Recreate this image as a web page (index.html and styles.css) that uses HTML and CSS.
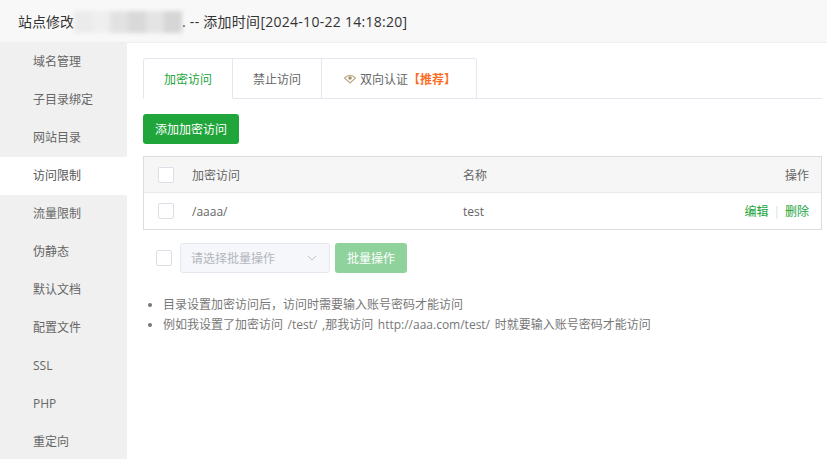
FILE: index.html
```html
<!DOCTYPE html>
<html lang="zh-CN">
<head>
    <meta charset="UTF-8">
    <meta name="viewport" content="width=device-width, initial-scale=1.0">
    <title>站点修改</title>
    <link rel="stylesheet" href="styles.css">
</head>
<body>
    <div class="title-bar">
        <span>站点修改</span><span class="blur-name"><i></i><i></i><i></i><i></i><i></i><i></i></span><span class="title-time">. -- 添加时间[2024-10-22 14:18:20]</span>
    </div>

    <div class="site-layout">
        <ul class="side-menu">
            <li>域名管理</li>
            <li>子目录绑定</li>
            <li>网站目录</li>
            <li class="active">访问限制</li>
            <li>流量限制</li>
            <li>伪静态</li>
            <li>默认文档</li>
            <li>配置文件</li>
            <li>SSL</li>
            <li>PHP</li>
            <li>重定向</li>
        </ul>

        <div class="content">
            <div class="tabs">
                <div class="tab active">加密访问</div>
                <div class="tab">禁止访问</div>
                <div class="tab tab-wide">
                    <svg class="eye-icon" width="12" height="10" viewBox="0 0 12 10">
                        <path d="M0.5 4 Q6 -1.5 11.5 4 L6 9 Z" fill="none" stroke="#b9a67f" stroke-width="1.1"/>
                        <circle cx="6" cy="4" r="1.8" fill="#a8926a"/>
                    </svg>
                    <span>双向认证</span><span class="tab-tip">【推荐】</span>
                </div>
            </div>

            <button class="btn btn-add">添加加密访问</button>

            <div class="table-box">
                <div class="table-row table-head">
                    <div class="cell-check"><span class="checkbox"></span></div>
                    <div class="cell-path">加密访问</div>
                    <div class="cell-name">名称</div>
                    <div class="cell-ops">操作</div>
                </div>
                <div class="table-row">
                    <div class="cell-check"><span class="checkbox"></span></div>
                    <div class="cell-path">/aaaa/</div>
                    <div class="cell-name">test</div>
                    <div class="cell-ops"><a class="op-link">编辑</a><span class="op-sep">|</span><a class="op-link">删除</a></div>
                </div>
            </div>

            <div class="batch-bar">
                <span class="checkbox"></span>
                <div class="batch-select">
                    <span>请选择批量操作</span>
                    <svg width="10" height="6" viewBox="0 0 10 6"><path d="M1 1 L5 5 L9 1" fill="none" stroke="#c0c4cc" stroke-width="1"/></svg>
                </div>
                <button class="btn btn-batch">批量操作</button>
            </div>

            <ul class="help-list">
                <li>目录设置加密访问后，访问时需要输入账号密码才能访问</li>
                <li>例如我设置了加密访问 /test/ ,那我访问 http://aaa.com/test/ 时就要输入账号密码才能访问</li>
            </ul>
        </div>
    </div>
</body>
</html>
```

FILE: styles.css
```css
* {
    box-sizing: border-box;
}

html, body {
    height: 100%;
}

body {
    margin: 0;
    overflow: hidden;
    background-color: #fff;
    color: #666;
    font-family: "Open Sans", "Noto Sans CJK SC", sans-serif;
    font-size: 12px;
}

.title-bar {
    display: flex;
    align-items: center;
    height: 43px;
    padding-left: 18px;
    background-color: #f8f8f8;
    border-bottom: 1px solid #eee;
    color: #333;
    font-size: 14px;
}

.title-time {
    letter-spacing: 0.27px;
}

.blur-name {
    display: flex;
    width: 108px;
    height: 22px;
    margin-top: 1px;
    filter: blur(2px);
}

.blur-name i {
    flex: 1;
    background-color: #ebebeb;
}

.blur-name i:nth-child(2) { background-color: #efefef; }
.blur-name i:nth-child(3) { background-color: #e2e2e2; }
.blur-name i:nth-child(4) { background-color: #d9d9d9; }
.blur-name i:nth-child(5) { background-color: #e4e4e4; }
.blur-name i:nth-child(6) { background-color: #d6d6d6; }

.site-layout {
    display: flex;
    height: 416px;
}

.side-menu {
    width: 127px;
    margin: 0;
    padding: 0;
    list-style: none;
    background-color: #f0f0f0;
    flex-shrink: 0;
}

.side-menu li {
    height: 38px;
    padding-left: 33px;
    line-height: 37px;
    color: #666;
}

.side-menu li.active {
    background-color: #fff;
    color: #555;
}

.content {
    flex: 1;
    padding: 15px 5px 0 16px;
}

.tabs {
    display: flex;
    height: 41px;
    border-bottom: 1px solid #e6e6ee;
}

.tab {
    display: flex;
    align-items: center;
    justify-content: center;
    width: 89px;
    height: 41px;
    padding-top: 1px;
    border: 1px solid #e6e6ee;
    border-left: none;
    background-color: #fff;
    color: #666;
}

.tab:first-child {
    width: 90px;
    border-left: 1px solid #e6e6ee;
    border-radius: 3px 0 0 0;
}

.tab:last-child {
    border-radius: 0 3px 0 0;
}

.tab.active {
    border-bottom-color: #fff;
    color: #20a53a;
}

.tab-wide {
    width: 155px;
    padding-left: 2px;
}

.eye-icon {
    margin-right: 4px;
}

.tab-tip {
    color: #fc6d26;
    font-weight: bold;
}

.btn {
    display: block;
    padding: 0;
    border: none;
    border-radius: 3px;
    color: #fff;
    font-family: inherit;
    font-size: 12px;
}

.btn-add {
    width: 96px;
    height: 30px;
    margin-top: 15px;
    background-color: #20a53a;
}

.table-box {
    margin-top: 12px;
    border: 1px solid #ddd;
}

.table-row {
    display: flex;
    align-items: center;
    height: 36px;
    color: #666;
}

.table-head {
    background-color: #f6f6f6;
    border-bottom: 1px solid #e9e9ef;
}

.cell-check {
    width: 48px;
    padding-left: 14px;
    display: flex;
}

.cell-path {
    width: 271px;
}

.cell-name {
    flex: 1;
}

.cell-ops {
    padding-right: 12px;
    text-align: right;
}

.checkbox {
    display: block;
    width: 16px;
    height: 16px;
    border: 1px solid #dcdfe6;
    border-radius: 2px;
    background-color: #fff;
}

.op-link {
    color: #20a53a;
}

.op-sep {
    margin: 0 5px;
    color: #ddd;
}

.batch-bar {
    display: flex;
    align-items: center;
    margin-top: 13px;
    padding-left: 13px;
}

.batch-select {
    display: flex;
    align-items: center;
    justify-content: space-between;
    width: 150px;
    height: 30px;
    margin-left: 8px;
    padding: 0 12px 0 10px;
    border: 1px solid #e4e7ed;
    border-radius: 3px;
    background-color: #f5f7fa;
    color: #b3b6bd;
}

.btn-batch {
    width: 72px;
    height: 30px;
    margin-left: 5px;
    background-color: #8fd29c;
}

.help-list {
    margin: 22px 0 0;
    padding-left: 20px;
    color: #777;
    word-spacing: 1.5px;
}

.help-list li {
    line-height: 20px;
}
```
